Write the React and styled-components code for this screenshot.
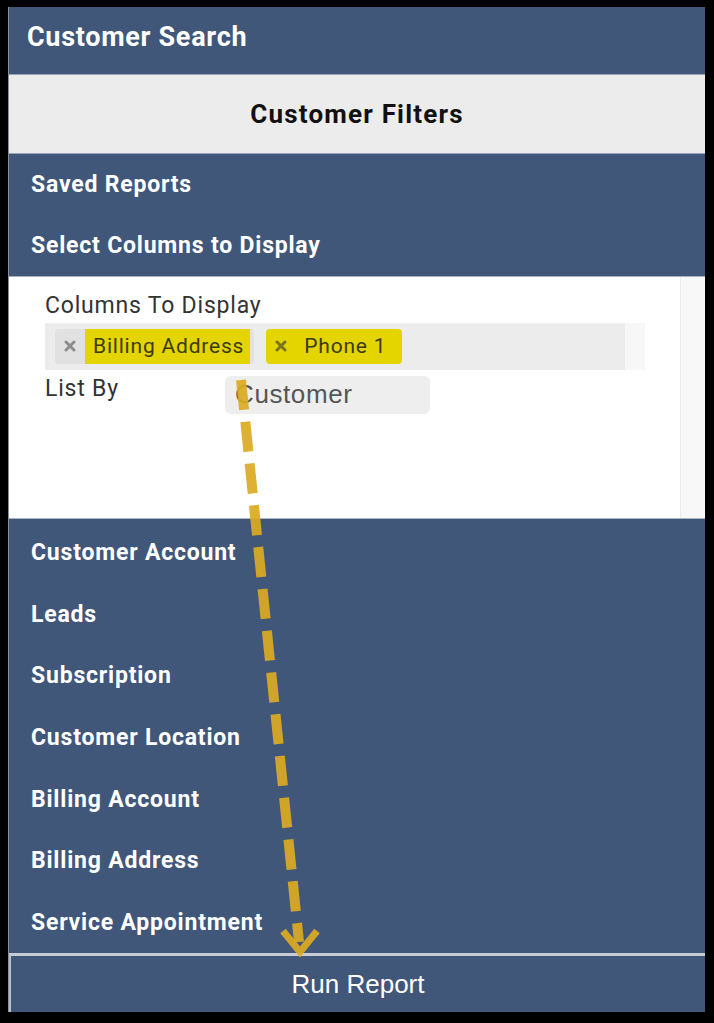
import React from 'react';
import styled, { createGlobalStyle } from 'styled-components';

const GlobalStyle = createGlobalStyle`
  html, body {
    margin: 0;
    padding: 0;
    background: #000;
  }
  * {
    box-sizing: border-box;
  }
`;

const BLUE = '#41577a';

const Frame = styled.div`
  position: relative;
  width: 714px;
  height: 1023px;
  background: #000;
  padding: 7px 9px 11px 8px;
`;

const Panel = styled.div`
  display: flex;
  flex-direction: column;
  height: 100%;
  background: ${BLUE};
  border-left: 1px solid #8a8f98;
`;

const TitleBar = styled.div`
  height: 68px;
  display: flex;
  align-items: center;
  padding: 0 0 6px 18px;
  color: #fff;
  font-family: Roboto, "Liberation Sans", sans-serif;
  font-weight: 700;
  font-size: 27px;
  letter-spacing: 0.7px;
  border-bottom: 1px solid #9aa6b8;
`;

const FilterBar = styled.div`
  height: 79px;
  display: flex;
  align-items: center;
  justify-content: center;
  background: #ececec;
  color: #111;
  font-family: Roboto, "Liberation Sans", sans-serif;
  font-weight: 700;
  font-size: 26px;
  letter-spacing: 1.2px;
  border-bottom: 1px solid #9aa6b8;
`;

const NavGroup = styled.div`
  display: flex;
  flex-direction: column;
  padding-top: ${p => p.$top || 0}px;
  flex: ${p => (p.$grow ? 1 : 'none')};
`;

const NavItem = styled.div`
  height: ${p => p.$h}px;
  display: flex;
  align-items: center;
  padding-left: 22px;
  color: #fff;
  font-family: Roboto, "Liberation Sans", sans-serif;
  font-weight: 700;
  font-size: 23px;
  letter-spacing: 0.8px;
`;

const Content = styled.div`
  height: 243px;
  display: flex;
  background: #fff;
  border-top: 1px solid #a8b2c2;
  border-bottom: 1px solid #a8b2c2;
`;

const Fields = styled.div`
  flex: 1;
  padding: 14px 34px 0 36px;
  font-family: Roboto, "Liberation Sans", sans-serif;
  color: #333;
`;

const Label = styled.div`
  font-size: 23px;
  letter-spacing: 0.8px;
  height: 32px;
  line-height: 30px;
`;

const TagBox = styled.div`
  display: flex;
  width: 600px;
  height: 47px;
  background: #ececec;
`;

const TagList = styled.div`
  flex: 1;
  display: flex;
  align-items: center;
  gap: 12px;
  padding-left: 10px;
`;

const TagEnd = styled.div`
  width: 20px;
  background: #f7f7f7;
`;

const Tag = styled.div`
  display: flex;
  align-items: stretch;
  height: 35px;
  border-radius: 4px;
  background: ${p => (p.$lit ? '#e4d500' : '#e1e1e1')};
  padding-right: ${p => (p.$lit ? 10 : 4)}px;
`;

const TagX = styled.span`
  width: 30px;
  display: flex;
  align-items: center;
  justify-content: center;
  color: ${p => (p.$lit ? '#7a7420' : '#8c8c8c')};
`;

const TagText = styled.span`
  display: flex;
  align-items: center;
  padding: 0 6px 0 8px;
  background: #e4d500;
  color: #3c3a12;
  font-size: 21px;
  letter-spacing: 0.8px;
`;

const ListRow = styled.div`
  display: flex;
  align-items: flex-start;
  margin-top: 4px;
`;

const ListLabel = styled(Label)`
  width: 180px;
`;

const Select = styled.div`
  width: 205px;
  height: 38px;
  margin-top: 2px;
  border-radius: 6px;
  background: #eeeeee;
  display: flex;
  align-items: center;
  padding-left: 10px;
  color: #555;
  font-family: "Liberation Sans", Arial, sans-serif;
  font-size: 26px;
  letter-spacing: 0.6px;
`;

const Scrollbar = styled.div`
  width: 25px;
  background: #f8f8f8;
  border-left: 1px solid #ececec;
`;

const RunButton = styled.div`
  height: 59px;
  display: flex;
  align-items: center;
  justify-content: center;
  border-top: 3px solid #c7ccd4;
  border-left: 2px solid #b8bfca;
  color: #fff;
  font-family: "Liberation Sans", Arial, sans-serif;
  font-size: 26px;
`;

const Overlay = styled.svg`
  position: absolute;
  left: 0;
  top: 0;
  pointer-events: none;
`;

const XIcon = () => (
  <svg width="12" height="12" viewBox="0 0 12 12">
    <path d="M2 2L10 10M10 2L2 10" stroke="currentColor" strokeWidth="3" strokeLinecap="round" />
  </svg>
);

const navTop = ['Saved Reports', 'Select Columns to Display'];
const navBottom = [
  'Customer Account',
  'Leads',
  'Subscription',
  'Customer Location',
  'Billing Account',
  'Billing Address',
  'Service Appointment',
];

export default function App() {
  return (
    <Frame>
      <GlobalStyle />
      <Panel>
        <TitleBar>Customer Search</TitleBar>
        <FilterBar>Customer Filters</FilterBar>
        <NavGroup>
          {navTop.map(t => (
            <NavItem key={t} $h={61}>{t}</NavItem>
          ))}
        </NavGroup>
        <Content>
          <Fields>
            <Label>Columns To Display</Label>
            <TagBox>
              <TagList>
                <Tag>
                  <TagX><XIcon /></TagX>
                  <TagText>Billing Address</TagText>
                </Tag>
                <Tag $lit>
                  <TagX $lit><XIcon /></TagX>
                  <TagText>Phone 1</TagText>
                </Tag>
              </TagList>
              <TagEnd />
            </TagBox>
            <ListRow>
              <ListLabel>List By</ListLabel>
              <Select>Customer</Select>
            </ListRow>
          </Fields>
          <Scrollbar />
        </Content>
        <NavGroup $grow $top={3}>
          {navBottom.map(t => (
            <NavItem key={t} $h={61.6}>{t}</NavItem>
          ))}
        </NavGroup>
        <RunButton>Run Report</RunButton>
      </Panel>
      <Overlay width="714" height="1023" viewBox="0 0 714 1023">
        <line
          x1="241"
          y1="380"
          x2="299"
          y2="942"
          stroke="#dcaa22"
          strokeOpacity="0.92"
          strokeWidth="10"
          strokeDasharray="30 12"
        />
        <path
          d="M283 931L300 952L317 931"
          fill="none"
          stroke="#dcaa22"
          strokeOpacity="0.92"
          strokeWidth="7"
          strokeLinejoin="miter"
        />
      </Overlay>
    </Frame>
  );
}
